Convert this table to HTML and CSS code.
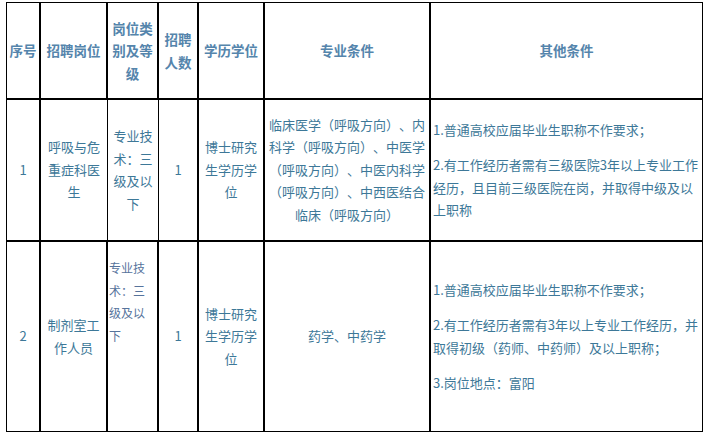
FILE: index.html
```html
<!DOCTYPE html>
<html lang="zh-CN">
<head>
<meta charset="utf-8">
<title>招聘岗位</title>
<link rel="stylesheet" href="styles.css">
</head>
<body>
<table class="jobs">
  <colgroup>
    <col class="c-no">
    <col class="c-post">
    <col class="c-grade">
    <col class="c-num">
    <col class="c-edu">
    <col class="c-major">
    <col class="c-other">
  </colgroup>
  <thead>
    <tr class="head">
      <th class="narrow">序号</th>
      <th>招聘岗位</th>
      <th>岗位类别及等级</th>
      <th>招聘人数</th>
      <th>学历学位</th>
      <th>专业条件</th>
      <th class="last">其他条件</th>
    </tr>
  </thead>
  <tbody>
    <tr class="row1">
      <td>1</td>
      <td class="thin">呼吸与危重症科医生</td>
      <td class="thin grade">专业技术：三级及以下</td>
      <td>1</td>
      <td>博士研究生学历学位</td>
      <td class="major">临床医学（呼吸方向）、内科学（呼吸方向）、中医学（呼吸方向）、中医内科学（呼吸方向）、中西医结合临床（呼吸方向）</td>
      <td class="last other">
        <p>1.普通高校应届毕业生职称不作要求；</p>
        <p>2.有工作经历者需有三级医院3年以上专业工作经历，且目前三级医院在岗，并取得中级及以上职称</p>
      </td>
    </tr>
    <tr class="row2">
      <td>2</td>
      <td>制剂室工作人员</td>
      <td class="grade-top">专业技术：三级及以下</td>
      <td>1</td>
      <td>博士研究生学历学位</td>
      <td class="major">药学、中药学</td>
      <td class="last other">
        <p>1.普通高校应届毕业生职称不作要求；</p>
        <p>2.有工作经历者需有3年以上专业工作经历，并取得初级（药师、中药师）及以上职称；</p>
        <p>3.岗位地点：富阳</p>
      </td>
    </tr>
  </tbody>
</table>
</body>
</html>
```

FILE: styles.css
```css
html, body {
  margin: 0;
  padding: 0;
  background: #ffffff;
}

body {
  padding: 2px 0 0 6px;
  font-family: "Noto Sans CJK SC", "Noto Sans", sans-serif;
}

.jobs {
  table-layout: fixed;
  width: 697px;
  border-collapse: separate;
  border-spacing: 0;
  border-top: 1px solid #000;
  border-left: 1px solid #000;
  text-spacing-trim: space-all;
}

.c-no { width: 34px; }
.c-post { width: 67px; }
.c-grade { width: 51px; }
.c-num { width: 40px; }
.c-edu { width: 66px; }
.c-major { width: 166px; }
.c-other { width: 272px; }

.jobs th,
.jobs td {
  border-right: 2px solid #000;
  border-bottom: 2px solid #000;
  padding: 0 5px;
  text-align: center;
  vertical-align: middle;
  line-height: 22.5px;
  word-break: break-all;
}

.jobs th {
  font-size: 13.5px;
  font-weight: bold;
  color: #5585ac;
  padding: 0 4px;
}

.jobs th.narrow {
  padding: 0;
}

.jobs td {
  font-size: 13px;
  font-weight: normal;
  color: #3d7898;
}

.jobs td.major {
  padding: 0 2px;
}

.jobs .last {
  border-right-width: 1px;
}

.head {
  height: 97px;
}

.row1 {
  height: 142px;
}

.row2 {
  height: 190px;
}

.row2 td {
  border-bottom-width: 1px;
}

.row1 .thin {
  border-right-width: 1px;
}

.jobs td.grade {
  padding: 0 4px;
}

.jobs td.grade-top {
  vertical-align: top;
  text-align: left;
  padding: 15px 3px 0 1px;
  font-size: 12px;
  line-height: 22.5px;
  color: #56739c;
}

.jobs td.other {
  text-align: left;
  padding: 0 0 0 2px;
}

.other p {
  margin: 0 0 13px;
}

.other p:last-child {
  margin-bottom: 0;
}
```
